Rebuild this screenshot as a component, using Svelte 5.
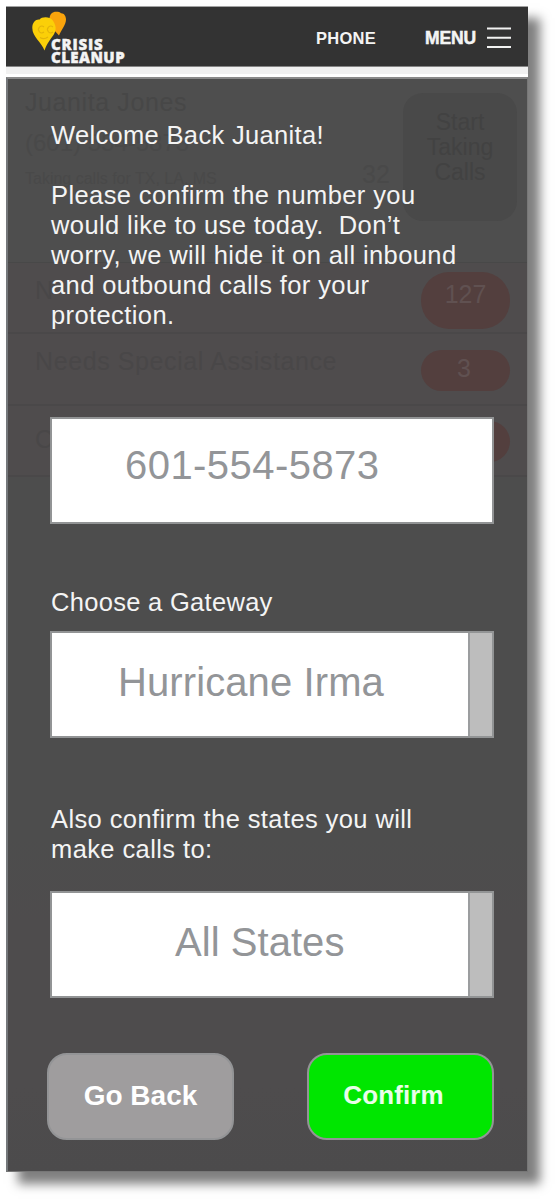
<script>
  const queues = [
    { label: 'N', count: '127', kind: 'first' },
    { label: 'Needs Special Assistance', count: '3', kind: 'second' },
    { label: 'C', count: '', kind: 'third' }
  ];
</script>

<main class="phone">
  <header>
    <div class="logo">
      <svg class="hearts" width="36" height="41" viewBox="0 0 36 41" aria-hidden="true">
        <path d="M27 24.5 C23 20 17.5 15 17.5 8.5 C17.5 3 20.5 .8 24 .8 C26.5 .8 28 1 29 2.2 C32 2 34 5 34 8.5 C34 14 29 19 27 24.5Z" fill="#faa40c" />
        <path d="M12.5 39.5 C9.5 31 .3 26 .3 17 C.3 11 4 8 7.6 8.6 C9.5 5.5 18 5.2 20.8 9.5 C24.5 15 24.5 19 21.5 24 C18 29 15 32.5 12.5 39.5Z" fill="#fbcf08" />
        <path d="M12 16a3.3 3.3 0 1 0 0 5M21 16a3.3 3.3 0 1 0 0 5M8 26.5q4 2.5 8-.5" fill="none" stroke="#e3b40a" stroke-width="1.1" />
      </svg>
      <div class="wordmark"><span class="crisis">CRISIS</span><span>CLEANUP</span></div>
    </div>
    <span class="nav phone-link">PHONE</span>
    <span class="nav menu-link">MENU</span>
    <svg class="burger" width="24" height="24" viewBox="0 0 24 24" aria-hidden="true">
      <path d="M0 2.5H24M0 11.7H24M0 21H24" stroke="#f1f2f1" stroke-width="2.1" />
    </svg>
  </header>
  <div class="strip"></div>

  <div class="stage">
    <div class="backdrop">
      <section class="profile">
        <div class="who">
          <p class="name">Juanita Jones</p>
          <p class="number">(601) 554-5873</p>
          <p class="taking">Taking calls for TX, LA, MS</p>
        </div>
        <span class="waiting">32</span>
        <div class="start">Start<br />Taking<br />Calls</div>
      </section>
      {#each queues as q}
        <div class="queue {q.kind}">
          <span>{q.label}</span>
          <b>{q.count}</b>
        </div>
      {/each}
      <div class="rest"></div>
    </div>

    <div class="dialog">
      <p class="copy welcome">Welcome Back Juanita!</p>
      <p class="copy intro">Please confirm the number you<br />would like to use today.&nbsp; Don’t<br />worry, we will hide it on all inbound<br />and outbound calls for your<br />protection.</p>
      <div class="field tel"><span>601-554-5873</span></div>
      <p class="copy gateway">Choose a Gateway</p>
      <div class="field select irma"><span>Hurricane Irma</span><i></i></div>
      <p class="copy states">Also confirm the states you will<br />make calls to:</p>
      <div class="field select all"><span>All States</span><i></i></div>
      <div class="actions">
        <button class="back">Go Back</button>
        <button class="confirm">Confirm</button>
      </div>
    </div>
  </div>
</main>

<style>
  :global(body) { background: #fff; }
  * { box-sizing: border-box; }
  p { margin: 0; }
  .phone {
    width: 522px;
    height: 1166px;
    margin: 6px 0 30px 6px;
    font-family: "Liberation Sans", Arial, sans-serif;
    box-shadow: 12px 12px 10px rgba(0, 0, 0, .5);
    background: #fff;
    display: flex;
    flex-direction: column;
  }
  header {
    height: 61px;
    flex: none;
    background: #333;
    border-top: 1px solid #a2a2a2;
    border-bottom: 1px solid #858585;
    display: flex;
    align-items: flex-start;
    color: #f4f4f4;
  }
  .logo { display: flex; width: 310px; padding: 4px 0 0 26px; }
  .hearts { flex: none; }
  .wordmark {
    display: flex;
    flex-direction: column;
    margin: 27px 0 0 -17px;
    font: 800 15px/12.7px "Open Sans", "Liberation Sans", sans-serif;
    letter-spacing: .45px;
    -webkit-text-stroke: .4px #f4f4f4;
  }
  .crisis { letter-spacing: .8px; }
  .nav { font-weight: 700; line-height: 20px; white-space: nowrap; }
  .phone-link { margin-top: 21px; width: 109px; font-size: 16.5px; letter-spacing: .25px; }
  .menu-link { margin-top: 21px; width: 62px; font-size: 17.5px; letter-spacing: -.1px; -webkit-text-stroke: .5px #f4f4f4; }
  .burger { margin-top: 19px; }
  .strip { height: 10px; flex: none; background: linear-gradient(#f1f1f1 65%, #fff 65%); }
  .stage {
    flex: 1;
    display: grid;
    grid-template: minmax(0, 1fr) / minmax(0, 1fr);
    border: 1px solid #777;
    border-top: 2px solid #8a8a8a;
    border-left: 2px solid #74777a;
  }
  .backdrop, .dialog { grid-area: 1 / 1; }

  .backdrop { background: #4e4e4e; color: #494949; display: flex; flex-direction: column; }
  .profile { height: 184px; flex: none; display: flex; border-bottom: 1px solid #484848; }
  .who { width: 298px; padding: 9px 0 0 17px; white-space: nowrap; }
  .name { font-size: 25px; line-height: 28px; letter-spacing: .6px; color: #474747; }
  .number { font-size: 24px; line-height: 28px; margin-top: 13px; }
  .taking { font-size: 16px; line-height: 20px; margin-top: 12px; }
  .waiting { width: 97px; padding: 80px 0 0 56px; font-size: 25px; line-height: 30px; }
  .start {
    width: 114px;
    height: 128px;
    margin-top: 14px;
    padding-top: 17px;
    border-radius: 20px;
    background: #494949;
    color: #424242;
    text-align: center;
    font-size: 23px;
    line-height: 25px;
  }
  .queue {
    flex: none;
    display: flex;
    justify-content: space-between;
    background: #4f4c4d;
    color: #494748;
    border-bottom: 2px solid #4a4849;
    font-size: 25px;
    line-height: 30px;
    padding: 9px 17px 0 27px;
  }
  .queue span { letter-spacing: .6px; margin-top: 3px; }
  .queue b {
    width: 89px;
    height: 57px;
    border-radius: 28px;
    background: #533f3e;
    color: #605151;
    font-weight: 400;
    text-align: center;
  }
  .first { height: 71px; }
  .first b { line-height: 45px; }
  .second { height: 72px; padding-top: 16px; }
  .second span { margin-top: -4px; }
  .second b { height: 41px; line-height: 37px; padding-right: 3px; }
  .third { height: 71px; padding-top: 15px; }
  .third b { height: 41px; }
  .rest { flex: 1; background: linear-gradient(#4d4d4d 0 52%, #4e4c4d 64% 88%, #4c4b4c); }

  .dialog { padding: 40px 34px 30px 42px; display: flex; flex-direction: column; z-index: 1; }
  .copy {
    flex: none;
    color: #f4f4f4;
    font-size: 25.5px;
    line-height: 30.1px;
    letter-spacing: .4px;
    white-space: nowrap;
    padding: 1px 0 0 1px;
  }
  .welcome { height: 60px; letter-spacing: .33px; }
  .intro { height: 238px; }
  .field {
    flex: none;
    width: 444px;
    height: 107px;
    border: 2px solid #929495;
    background: #fff;
    color: #939598;
    font-size: 40px;
    line-height: 46px;
    display: flex;
    white-space: nowrap;
  }
  .field span { flex: 1; }
  .field i { width: 24px; border-left: 2px solid #9b9d9f; background: #bdbdbd; }
  .tel span { padding: 23px 0 0 73px; letter-spacing: .45px; }
  .irma span { padding: 26px 0 0 66px; letter-spacing: .1px; }
  .all span { padding: 26px 0 0 123px; letter-spacing: .05px; }
  .gateway { margin-top: 63px; height: 44px; padding-top: 0; letter-spacing: .3px; }
  .states { margin-top: 66px; height: 87px; padding-top: 0; }
  .actions { flex: none; display: flex; justify-content: space-between; margin: 55px 0 0 -3px; width: 447px; }
  button {
    width: 187px;
    height: 87px;
    padding: 0 0 2px;
    border: 2px solid #939496;
    border-radius: 20px;
    font: 700 28px/34px "Liberation Sans", Arial, sans-serif;
    color: #fff;
  }
  .back { background: #9f9d9e; }
  .confirm { background: #00e600; color: #e9fee9; font-size: 26px; letter-spacing: .1px; padding: 0 14px 4px 0; }
</style>
